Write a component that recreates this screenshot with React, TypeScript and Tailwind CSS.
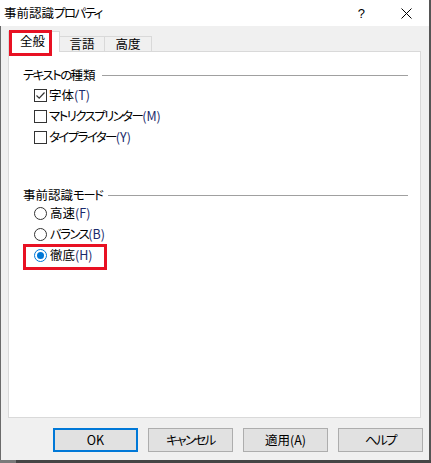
import React from "react";

const font = "font-['Noto_Sans_CJK_JP','Noto_Sans',sans-serif] [font-feature-settings:'palt']";

function JP({ text }: { text: string }) {
  const parts = text.match(/[\u3040-\u30ff]+|[^\u3040-\u30ff]+/g) || [];
  return (
    <>
      {parts.map((p, i) =>
        /[\u3040-\u30ff]/.test(p) ? (
          <span key={i} className="tracking-[-1.6px]">
            {p}
          </span>
        ) : (
          <span key={i}>{p}</span>
        )
      )}
    </>
  );
}

function GroupLabel({ text }: { text: string }) {
  return (
    <div className="flex items-center h-[16px] pr-[12px]">
      <span className="text-[12.5px] leading-none text-black">
        <JP text={text} />
      </span>
      <div className="flex-1 h-px bg-[#a0a0a0] ml-[6px]" />
    </div>
  );
}

function CheckRow({ label, acc, checked }: { label: string; acc: string; checked?: boolean }) {
  return (
    <div className="flex items-center h-[21px] pl-[11px]">
      <div className="w-[13px] h-[13px] border border-[#333] bg-white flex items-center justify-center">
        {checked && (
          <svg width="11" height="11" viewBox="0 0 11 11">
            <path d="M1.5 5.5 L4.2 8.2 L9.5 2.5" fill="none" stroke="#333" strokeWidth="1.2" />
          </svg>
        )}
      </div>
      <span className="ml-[2px] text-[12.5px] leading-none text-black">
        <JP text={label} />
        <span className="text-[#1a2a6c]">{acc}</span>
      </span>
    </div>
  );
}

function RadioRow({ label, acc, selected, boxed }: { label: string; acc: string; selected?: boolean; boxed?: boolean }) {
  return (
    <div className="relative flex items-center h-[21px] pl-[11px]">
      <div
        className={`w-[13px] h-[13px] rounded-full border bg-white flex items-center justify-center ${
          selected ? "border-[#0078d7]" : "border-[#333]"
        }`}
      >
        {selected && <div className="w-[7px] h-[7px] rounded-full bg-[#0078d7]" />}
      </div>
      <span className="ml-[3px] text-[12.5px] leading-none text-black">
        <JP text={label} />
        <span className="text-[#1a2a6c]">{acc}</span>
      </span>
      {boxed && (
        <div className="absolute left-[0px] top-[-1px] w-[84px] h-[26px] border-[3px] border-[#e81123]" />
      )}
    </div>
  );
}

function Btn({ label, primary }: { label: string; primary?: boolean }) {
  return (
    <div
      className={`w-[85px] h-[24px] flex items-center justify-center bg-[#e1e1e1] text-[12.5px] leading-none text-black ${
        primary ? "border-2 border-[#0078d7]" : "border border-[#adadad]"
      }`}
    >
      <span>
        <JP text={label} />
      </span>
    </div>
  );
}

export default function App() {
  return (
    <div className={`w-[431px] h-[463px] flex flex-col bg-[#f0f0f0] ${font}`}>
      <div className="flex flex-1 min-h-0">
        <div className="flex-1 flex flex-col">
          {/* Title bar */}
          <div className="h-[26px] bg-white flex items-center pl-[4px]">
            <span className="text-[12.5px] leading-none text-black">
              <JP text="事前認識プロパティ" />
            </span>
            <div className="flex-1" />
            <span className="text-[13px] leading-none text-black mr-[36px] font-['Liberation_Sans',sans-serif]">?</span>
            <svg width="11" height="11" viewBox="0 0 11 11" className="mr-[17px]">
              <path d="M0.5 0.5 L10.5 10.5 M10.5 0.5 L0.5 10.5" stroke="#000" strokeWidth="1" />
            </svg>
          </div>
          {/* Body */}
          <div className="flex-1 flex flex-col border-l border-[#6b6b6b]">
            {/* Tabs */}
            <div className="flex items-end h-[20px] mt-[5px] ml-[7px] relative z-10">
              <div className="relative w-[52px] h-[21px] -mb-px bg-white border-l border-t border-r border-[#d9d9d9] flex items-center justify-center">
                <span className="text-[12.5px] leading-none text-black -mt-[2px] mr-[3px]">全般</span>
                <div className="absolute left-[0px] top-[-2px] w-[43px] h-[26px] border-[3px] border-[#e81123]" />
              </div>
              <div className="w-[45px] h-[15px] border-t border-r border-[#d9d9d9] flex items-center justify-center">
                <span className="text-[12.5px] leading-none text-black">言語</span>
              </div>
              <div className="w-[47px] h-[15px] border-t border-r border-[#d9d9d9] flex items-center justify-center">
                <span className="text-[12.5px] leading-none text-black">高度</span>
              </div>
            </div>
            {/* Panel */}
            <div className="ml-[7px] mr-[8px] h-[367px] bg-white border border-[#d9d9d9] pl-[14px] pt-[15px] flex flex-col">
              <GroupLabel text="テキストの種類" />
              <div className="h-[2px]" />
              <CheckRow label="字体" acc="(T)" checked />
              <CheckRow label="マトリクスプリンター" acc="(M)" />
              <CheckRow label="タイプライター" acc="(Y)" />
              <div className="h-[39px]" />
              <GroupLabel text="事前認識モード" />
              <RadioRow label="高速" acc="(F)" />
              <RadioRow label="バランス" acc="(B)" />
              <RadioRow label="徹底" acc="(H)" selected boxed />
            </div>
            {/* Buttons */}
            <div className="flex justify-end gap-[10px] pr-[6px] mt-[10px]">
              <Btn label="OK" primary />
              <Btn label="キャンセル" />
              <Btn label="適用(A)" />
              <Btn label="ヘルプ" />
            </div>
          </div>
        </div>
        <div className="w-[2px] bg-[#555]" />
      </div>
      <div className="h-[3px] flex">
        <div className="w-[16px] bg-[#7a7a7a]" />
        <div className="flex-1 bg-[#454545]" />
      </div>
    </div>
  );
}
